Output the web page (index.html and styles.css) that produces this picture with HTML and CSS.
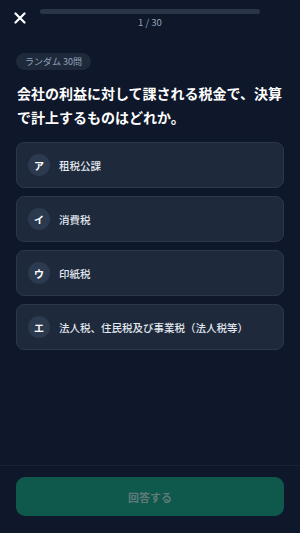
FILE: index.html
```html
<!DOCTYPE html>
<html lang="ja">
<head>
  <meta charset="UTF-8" />
  <meta name="viewport" content="width=device-width, initial-scale=1.0"/>
  <title>クイズ</title>
  <link rel="stylesheet" href="styles.css">
</head>
<body>
  <div class="screen">
    <header class="top">
      <button class="close" aria-label="閉じる">
        <svg width="12" height="12" viewBox="0 0 12 12">
          <path d="M1.5 1.5 L10.5 10.5 M10.5 1.5 L1.5 10.5" stroke="#fff" stroke-width="2.2" stroke-linecap="round"/>
        </svg>
      </button>
      <div class="progress">
        <div class="bar"><div class="fill" style="width: 0%"></div></div>
        <div class="count">1 / 30</div>
      </div>
    </header>

    <main class="body">
      <span class="badge">ランダム 30問</span>
      <h1 class="question">会社の利益に対して課される税金で、決算で計上するものはどれか。</h1>

      <div class="options">
        <button class="option"><span class="mark">ア</span><span class="label">租税公課</span></button>
        <button class="option"><span class="mark">イ</span><span class="label">消費税</span></button>
        <button class="option"><span class="mark">ウ</span><span class="label">印紙税</span></button>
        <button class="option"><span class="mark">エ</span><span class="label">法人税、住民税及び事業税（法人税等）</span></button>
      </div>
    </main>

    <footer class="bottom">
      <button class="submit" disabled>回答する</button>
    </footer>
  </div>
</body>
</html>
```

FILE: styles.css
```css
html, body {
  margin: 0;
  padding: 0;
  height: 100%;
}
body {
  font-family: "Noto Sans CJK JP", "Noto Sans", sans-serif;
  background: #0f172a;
  color: #fff;
}
button {
  font-family: inherit;
}
.screen {
  display: flex;
  flex-direction: column;
  height: 533px;
}
.top {
  display: flex;
  align-items: flex-start;
  padding: 9px 40px 0 14px;
  height: 30px;
  box-sizing: border-box;
}
.close {
  width: 12px;
  height: 12px;
  padding: 0;
  margin-top: 3px;
  border: none;
  background: none;
  display: flex;
}
.progress {
  flex: 1;
  margin-left: 14px;
  display: flex;
  flex-direction: column;
  align-items: center;
}
.bar {
  width: 100%;
  height: 5px;
  border-radius: 3px;
  background: #2a3648;
  overflow: hidden;
}
.fill {
  height: 100%;
  background: #10b981;
}
.count {
  font-size: 9.5px;
  line-height: 14px;
  color: #94a3b8;
  margin-top: 1px;
}
.body {
  flex: 1;
  padding: 23px 16px 0;
}
.badge {
  display: block;
  width: max-content;
  font-size: 9px;
  line-height: 17px;
  padding: 0 9px;
  border-radius: 9px;
  background: #1e293b;
  color: #94a3b8;
}
.question {
  font-size: 14px;
  font-weight: 700;
  line-height: 24px;
  margin: 11px 0 0 1px;
  color: #fff;
}
.options {
  display: flex;
  flex-direction: column;
  gap: 8px;
  margin-top: 13px;
}
.option {
  display: flex;
  align-items: center;
  height: 46px;
  padding: 0 11px;
  border: 1px solid #2b374a;
  border-radius: 8px;
  background: #1e293b;
  color: #e2e8f0;
  text-align: left;
}
.mark {
  width: 22px;
  height: 22px;
  border-radius: 50%;
  background: #2c3a4f;
  color: #fff;
  font-size: 10px;
  font-weight: 700;
  display: flex;
  align-items: center;
  justify-content: center;
  flex-shrink: 0;
}
.label {
  margin-left: 9px;
  font-size: 10.5px;
  font-weight: 500;
}
.bottom {
  border-top: 1px solid #1a2435;
  padding: 11px 16px 17px;
}
.submit {
  width: 100%;
  height: 39px;
  border: none;
  border-radius: 9px;
  background: #0e594b;
  color: #5f7a78;
  font-size: 11px;
  font-weight: 700;
}
```
